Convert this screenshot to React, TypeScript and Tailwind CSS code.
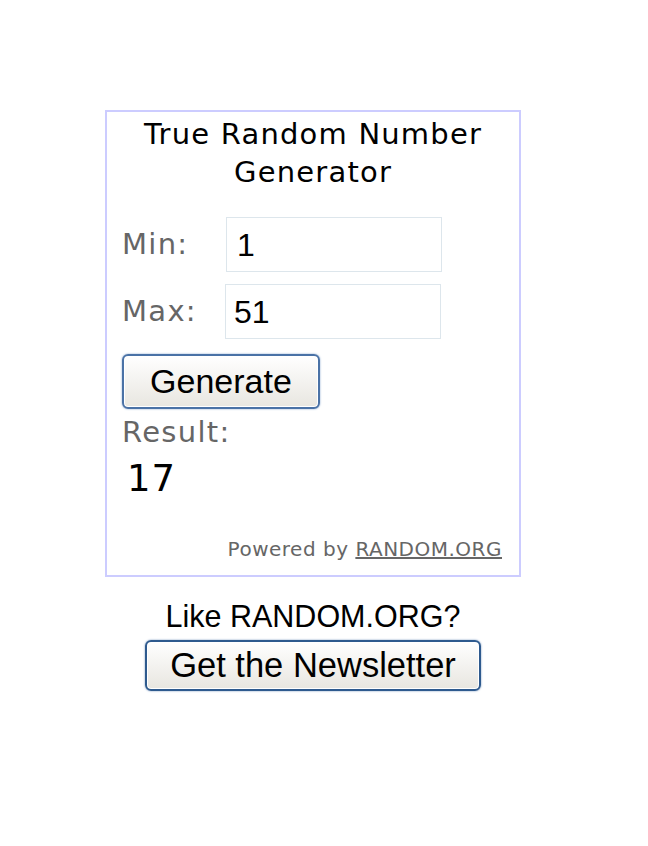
import React from "react";

const verdana = "font-['DejaVu_Sans',Verdana,sans-serif]";
const arial = "font-['Liberation_Sans',Arial,sans-serif]";

export default function App() {
  return (
    <div className="w-[648px] h-[846px] bg-white pt-[110px] pl-[105px]">
      <div className="w-[416px] flex flex-col items-center">
        <div className="w-[416px] h-[467px] border-[2px] border-[#ccccff] flex flex-col pt-[3px] px-[15px]">
          <div className={`${verdana} text-[29px] leading-[38px] text-black text-center tracking-[1.2px]`}>
            True Random Number Generator
          </div>
          <div className="flex items-center mt-[26px]">
            <span className={`${verdana} text-[29px] tracking-[1.3px] text-[#666666] w-[104px]`}>Min:</span>
            <div className={`${arial} w-[216px] h-[55px] border border-[#dde6ec] flex items-center pl-[10px] text-[32px] text-black`}>1</div>
          </div>
          <div className="flex items-center mt-[12px]">
            <span className={`${verdana} text-[29px] tracking-[1.3px] text-[#666666] w-[103px]`}>Max:</span>
            <div className={`${arial} w-[216px] h-[55px] border border-[#dde6ec] flex items-center pl-[8px] text-[32px] text-black`}>51</div>
          </div>
          <div className="mt-[15px]">
            <div className={`${arial} w-[198px] h-[55px] rounded-[6px] border-[2px] border-[#4a72a6] bg-gradient-to-b from-[#ffffff] to-[#e8e6e0] shadow-[inset_0_0_0_1px_#ffffff,0_0_2px_#7a9cc8] flex items-center justify-center text-[34px] text-black`}>
              Generate
            </div>
          </div>
          <div className={`${verdana} text-[29px] tracking-[1.3px] text-[#666666] leading-[34px] mt-[6px]`}>Result:</div>
          <div className={`${verdana} text-[37px] tracking-[1px] text-black leading-[44px] mt-[8px] pl-[5px]`}>17</div>
          <div className={`${verdana} text-[20px] tracking-[0.5px] text-[#666666] text-right mt-[33px] pr-[2px]`}>
            Powered by <span className="underline">RANDOM.ORG</span>
          </div>
        </div>
        <div className={`${arial} text-[30.5px] text-black mt-[21px] leading-[36px]`}>Like RANDOM.ORG?</div>
        <div className={`${arial} mt-[6px] w-[336px] h-[51px] rounded-[6px] border-[2px] border-[#2e5a8e] bg-gradient-to-b from-[#ffffff] to-[#e8e6e0] shadow-[inset_0_0_0_1px_#ffffff,0_0_2px_#6a8cb8] flex items-center justify-center text-[34.5px] text-black`}>
          Get the Newsletter
        </div>
      </div>
    </div>
  );
}
